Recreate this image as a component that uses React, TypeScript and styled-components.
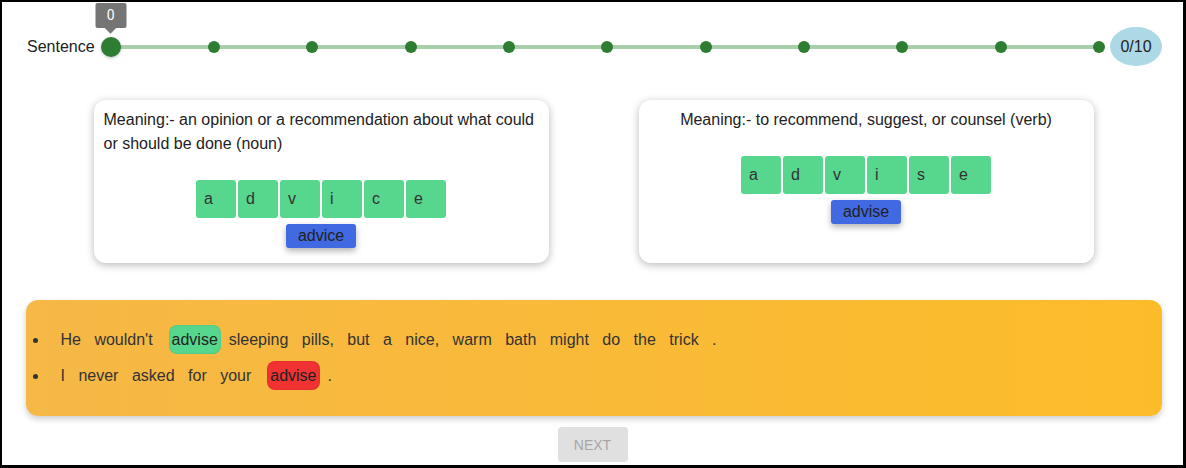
import styled, { createGlobalStyle } from "styled-components";

const GlobalStyle = createGlobalStyle`
  html, body {
    margin: 0;
    padding: 0;
    background: #fff;
  }
  body {
    font-family: "Liberation Sans", Arial, sans-serif;
    font-size: 16px;
    color: #222;
  }
`;

const Frame = styled.div`
  width: 1186px;
  height: 468px;
  box-sizing: border-box;
  border-style: solid;
  border-color: #000;
  border-width: 2px 3px 3px 2px;
  display: flex;
  flex-direction: column;
  overflow: hidden;
`;

const ProgressRow = styled.div`
  display: flex;
  align-items: center;
  padding: 25px 21px 0 25px;
`;

const Label = styled.span`
  font-size: 16px;
  color: #222;
`;

const Slider = styled.div`
  position: relative;
  flex: 1;
  height: 4px;
  margin: 0 11px 0 21px;
  background: #a8cfa9;
  border-radius: 2px;
`;

const Mark = styled.span<{ $pos: number }>`
  position: absolute;
  top: 50%;
  left: ${(p) => p.$pos}%;
  width: 12px;
  height: 12px;
  border-radius: 50%;
  background: #2e7d32;
  transform: translate(-50%, -50%);
`;

const Thumb = styled.span`
  position: absolute;
  top: 50%;
  left: -5px;
  width: 20px;
  height: 20px;
  border-radius: 50%;
  background: #2e7d32;
  transform: translate(-50%, -50%);
  box-shadow: 0 1px 3px rgba(0, 0, 0, 0.25);
`;

const ValueLabel = styled.span`
  position: absolute;
  bottom: 29px;
  left: 50%;
  transform: translateX(-50%);
  width: 31px;
  height: 25px;
  display: flex;
  align-items: center;
  justify-content: center;
  background: #757575;
  color: #fff;
  font-family: Roboto, "Liberation Sans", sans-serif;
  font-size: 14px;
  border-radius: 2px;

  &::after {
    content: "";
    position: absolute;
    bottom: -4px;
    left: 50%;
    width: 8px;
    height: 8px;
    background: #757575;
    transform: translateX(-50%) rotate(45deg);
  }
`;

const Counter = styled.div`
  width: 52px;
  height: 39px;
  border-radius: 50%;
  background: #add8e6;
  display: flex;
  align-items: center;
  justify-content: center;
  font-size: 16px;
  color: #222;
`;

const CardRow = styled.div`
  display: flex;
  justify-content: center;
  gap: 90px;
  margin-top: 34px;
  padding-left: 2px;
`;

const Card = styled.div`
  width: 455px;
  box-sizing: border-box;
  padding: 8px 10px 15px;
  background: #fff;
  border-radius: 12px;
  box-shadow: 0 2px 8px rgba(0, 0, 0, 0.28);
  display: flex;
  flex-direction: column;
  align-items: center;
`;

const Meaning = styled.p`
  margin: 0;
  line-height: 24px;
  font-size: 16px;
  color: #222;
  text-align: left;
`;

const Tiles = styled.div`
  display: flex;
  gap: 2px;
  margin-top: 24px;
`;

const Tile = styled.div`
  width: 40px;
  height: 38px;
  box-sizing: border-box;
  padding-left: 8px;
  display: flex;
  align-items: center;
  background: #57d68d;
  border-radius: 3px;
  color: #333;
  font-size: 16px;
`;

const WordTag = styled.div`
  margin-top: 6px;
  height: 24px;
  padding: 0 12px;
  display: flex;
  align-items: center;
  background: #4169e1;
  border-radius: 3px;
  color: #222;
  font-size: 16px;
  box-shadow: 0 3px 6px rgba(0, 0, 0, 0.3);
`;

const SentenceBox = styled.div`
  margin: 37px 21px 0 24px;
  height: 116px;
  box-sizing: border-box;
  padding: 22px 0;
  border-radius: 12px;
  background: linear-gradient(to right, #f6b846, #fcbc2a);
  box-shadow: 0 3px 6px rgba(0, 0, 0, 0.2);
`;

const SentenceList = styled.ul`
  margin: 0;
  padding-left: 23px;
`;

const SentenceItem = styled.li`
  padding-left: 7px;
  line-height: 36px;
  color: #333;
  font-size: 16px;
`;

const Word = styled.span`
  padding: 0 4.5px;
`;

const Chip = styled.span<{ $ok: boolean }>`
  display: inline-block;
  margin: 0 -1px 0 7px;
  padding: 0 3px;
  line-height: 29px;
  border-radius: 8px;
  color: #222;
  background: ${(p) => (p.$ok ? "#57d68d" : "#f03232")};
  box-shadow: inset 0 0 2px rgba(0, 0, 0, 0.15);
`;

const NextButton = styled.button`
  align-self: center;
  margin-top: 11px;
  width: 70px;
  height: 35px;
  border: none;
  border-radius: 4px;
  background: #e0e0e0;
  color: #a6a6a6;
  font-family: "Liberation Sans", Arial, sans-serif;
  font-size: 14px;
  font-weight: 400;
  text-transform: uppercase;
`;

const cards = [
  {
    meaning:
      "Meaning:- an opinion or a recommendation about what could or should be done (noun)",
    word: "advice",
  },
  {
    meaning: "Meaning:- to recommend, suggest, or counsel (verb)",
    word: "advise",
  },
];

const sentences = [
  {
    before: ["He", "wouldn't"],
    answer: "advise",
    ok: true,
    after: ["sleeping", "pills,", "but", "a", "nice,", "warm", "bath", "might", "do", "the", "trick", "."],
  },
  {
    before: ["I", "never", "asked", "for", "your"],
    answer: "advise",
    ok: false,
    after: ["."],
  },
];

export default function App() {
  const marks = Array.from({ length: 11 }, (_, i) => i * 10);

  return (
    <>
      <GlobalStyle />
      <Frame>
        <ProgressRow>
          <Label>Sentence</Label>
          <Slider>
            {marks.slice(1).map((m) => (
              <Mark key={m} $pos={m} />
            ))}
            <Thumb>
              <ValueLabel>0</ValueLabel>
            </Thumb>
          </Slider>
          <Counter>0/10</Counter>
        </ProgressRow>

        <CardRow>
          {cards.map((c) => (
            <Card key={c.word}>
              <Meaning>{c.meaning}</Meaning>
              <Tiles>
                {c.word.split("").map((ch, i) => (
                  <Tile key={i}>{ch}</Tile>
                ))}
              </Tiles>
              <WordTag>{c.word}</WordTag>
            </Card>
          ))}
        </CardRow>

        <SentenceBox>
          <SentenceList>
            {sentences.map((s, idx) => (
              <SentenceItem key={idx}>
                {s.before.map((w, i) => (
                  <span key={"b" + i}>
                    <Word>{w}</Word>{" "}
                  </span>
                ))}
                <Chip $ok={s.ok}>{s.answer}</Chip>
                {s.after.map((w, i) => (
                  <span key={"a" + i}>
                    {" "}
                    <Word>{w}</Word>
                  </span>
                ))}
              </SentenceItem>
            ))}
          </SentenceList>
        </SentenceBox>

        <NextButton disabled>Next</NextButton>
      </Frame>
    </>
  );
}
